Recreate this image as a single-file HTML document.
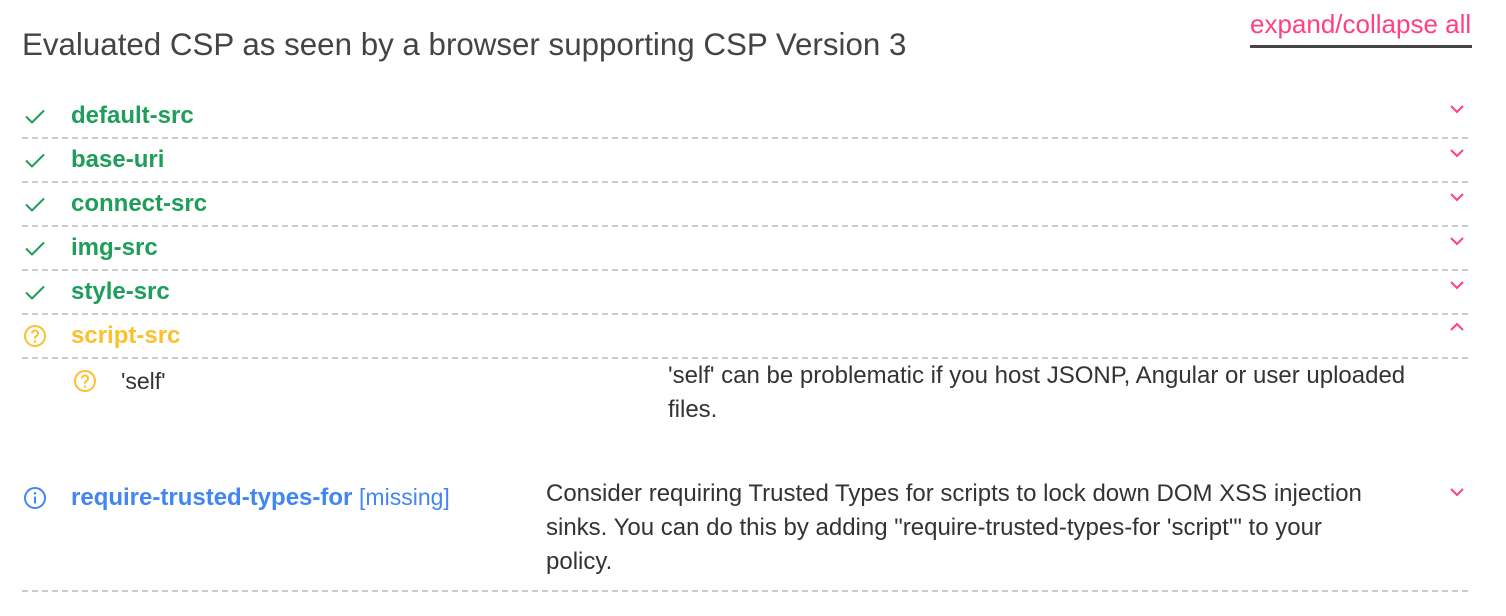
<!DOCTYPE html>
<html><head><meta charset="utf-8"><style>
body{margin:0;width:1506px;height:616px;background:#fff;font-family:"Liberation Sans",Arial,sans-serif;position:relative;overflow:hidden}
.a{position:absolute;white-space:nowrap}
.title{left:22px;top:27px;font-size:31.3px;color:#444}
.exp{left:1250px;top:9px;font-size:26px;color:#ff4081;border-bottom:3px solid #444;padding-bottom:5px;width:222px}
.line{position:absolute;left:22px;width:1450px;height:2px;background:repeating-linear-gradient(90deg,#ccc 0 6px,transparent 6px 10px)}
.name{font-weight:bold;font-size:24px;left:71px}
.g{color:#1e9e5a}.y{color:#fbc02d}.b{color:#4285f4}
.chev{position:absolute;left:1450px}
.txt{font-size:24px;color:#333;line-height:34px;white-space:normal}
</style></head><body>
<div class="a title">Evaluated CSP as seen by a browser supporting CSP Version 3</div>
<div class="a exp">expand/collapse all</div>

<svg width="0" height="0" style="position:absolute"><defs>
<symbol id="ck" viewBox="0 0 24 24"><path d="M3 12.5l6 6L21 6.5" fill="none" stroke="#1e9e5a" stroke-width="2"/></symbol>
<symbol id="dn" viewBox="0 0 14 10"><path d="M1 2l6 6 6-6" fill="none" stroke="#ff4081" stroke-width="2"/></symbol>
<symbol id="up" viewBox="0 0 14 10"><path d="M1 8l6-6 6 6" fill="none" stroke="#ff4081" stroke-width="2"/></symbol>
<symbol id="q" viewBox="0 0 24 24"><circle cx="12" cy="12" r="10" fill="none" stroke="#fbc02d" stroke-width="2"/><path d="M9 9.5a3 3 0 1 1 4 2.8c-.8.4-1 1-1 2v.5" fill="none" stroke="#fbc02d" stroke-width="2"/><circle cx="12" cy="17.5" r="1.2" fill="#fbc02d"/></symbol>
<symbol id="i" viewBox="0 0 24 24"><circle cx="12" cy="12" r="10" fill="none" stroke="#4285f4" stroke-width="2"/><path d="M12 10.5v7" stroke="#4285f4" stroke-width="2"/><circle cx="12" cy="7.3" r="1.3" fill="#4285f4"/></symbol>
</defs></svg>

<svg class="a" style="left:23px;top:104px" width="24" height="24"><use href="#ck"/></svg>
<div class="a name g" style="top:102px">default-src</div>
<svg class="chev" style="top:104px" width="14" height="10"><use href="#dn"/></svg>
<div class="line" style="top:137px"></div>

<svg class="a" style="left:23px;top:148px" width="24" height="24"><use href="#ck"/></svg>
<div class="a name g" style="top:146px">base-uri</div>
<svg class="chev" style="top:148px" width="14" height="10"><use href="#dn"/></svg>
<div class="line" style="top:181px"></div>

<svg class="a" style="left:23px;top:192px" width="24" height="24"><use href="#ck"/></svg>
<div class="a name g" style="top:190px">connect-src</div>
<svg class="chev" style="top:192px" width="14" height="10"><use href="#dn"/></svg>
<div class="line" style="top:225px"></div>

<svg class="a" style="left:23px;top:236px" width="24" height="24"><use href="#ck"/></svg>
<div class="a name g" style="top:234px">img-src</div>
<svg class="chev" style="top:236px" width="14" height="10"><use href="#dn"/></svg>
<div class="line" style="top:269px"></div>

<svg class="a" style="left:23px;top:280px" width="24" height="24"><use href="#ck"/></svg>
<div class="a name g" style="top:278px">style-src</div>
<svg class="chev" style="top:280px" width="14" height="10"><use href="#dn"/></svg>
<div class="line" style="top:313px"></div>

<svg class="a" style="left:23px;top:324px" width="24" height="24"><use href="#q"/></svg>
<div class="a name y" style="top:322px">script-src</div>
<svg class="chev" style="top:322px" width="14" height="10"><use href="#up"/></svg>
<div class="line" style="top:357px"></div>

<svg class="a" style="left:73px;top:369px" width="24" height="24"><use href="#q"/></svg>
<div class="a" style="left:121px;top:368px;font-size:23px;color:#333">'self'</div>
<div class="a txt" style="left:668px;top:359px;width:760px">'self' can be problematic if you host JSONP, Angular or user uploaded files.</div>

<svg class="a" style="left:23px;top:486px" width="24" height="24"><use href="#i"/></svg>
<div class="a name b" style="top:484px">require-trusted-types-for <span style="font-weight:normal;font-size:23px">[missing]</span></div>
<div class="a txt" style="left:546px;top:477px;width:822px">Consider requiring Trusted Types for scripts to lock down DOM XSS injection sinks. You can do this by adding "require-trusted-types-for 'script'" to your policy.</div>
<svg class="chev" style="top:487px" width="14" height="10"><use href="#dn"/></svg>
<div class="line" style="top:590px"></div>
</body></html>
